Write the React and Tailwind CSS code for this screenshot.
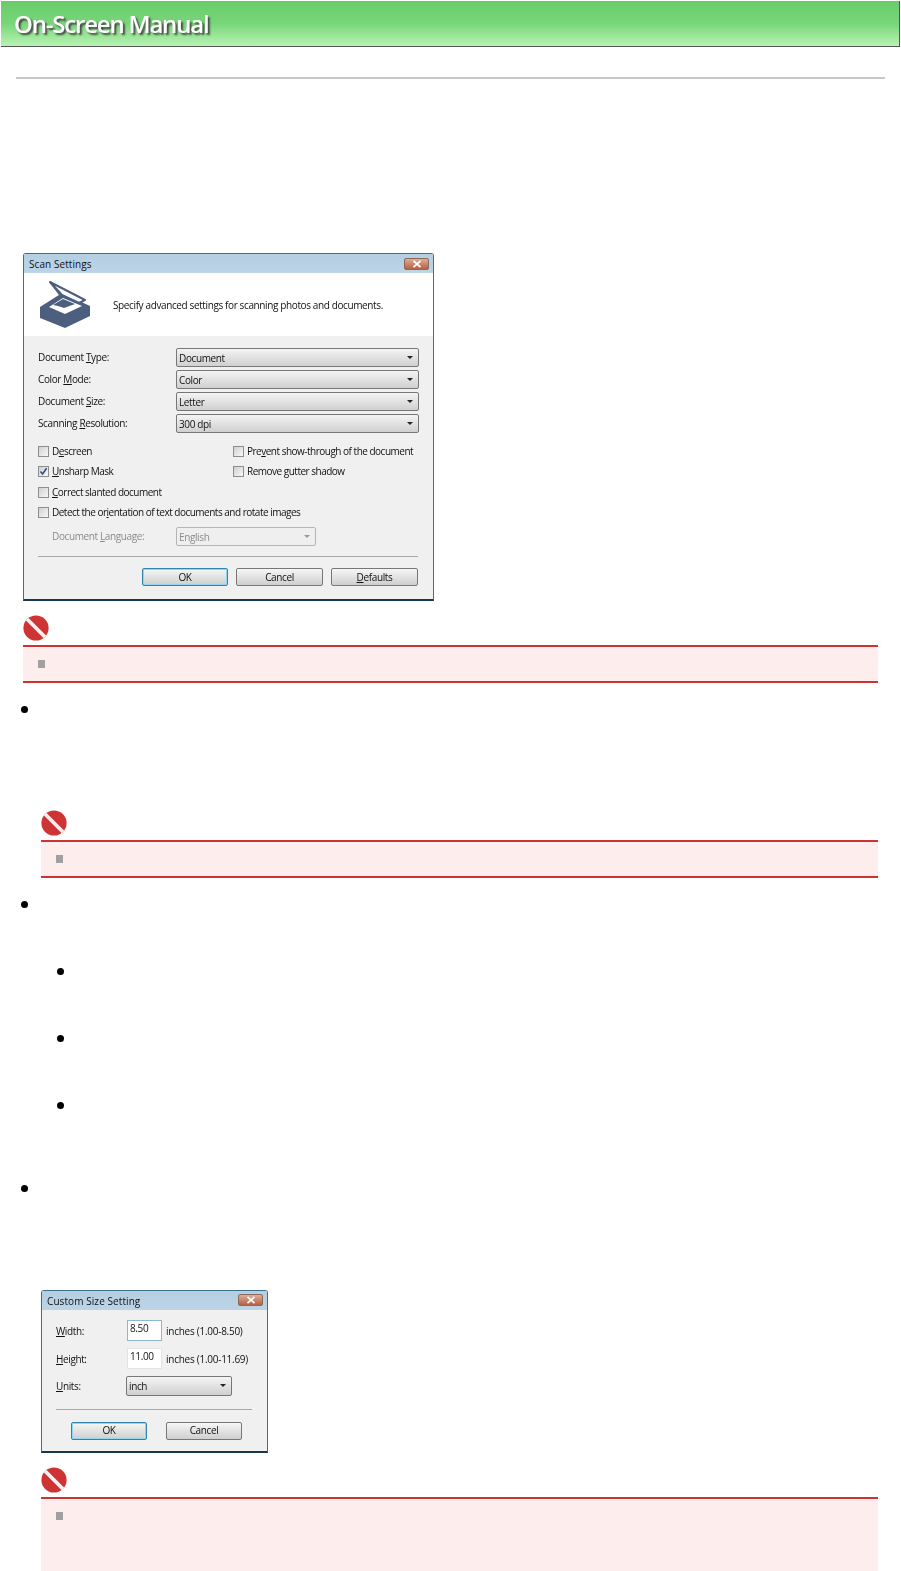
const ui = "font-['Open_Sans','Noto_Sans',sans-serif] text-[10px] text-[#111] tracking-[-0.38px]";
const disabledUi = "font-['Open_Sans','Noto_Sans',sans-serif] text-[10px] text-[#8b8b8b] tracking-[-0.38px]";
const checkUi = "font-['Open_Sans','Noto_Sans',sans-serif] text-[10px] text-[#111] tracking-[-0.5px]";
const titleUi = "font-['Open_Sans','Noto_Sans',sans-serif] text-[10px] text-[#111] tracking-[0.08px]";
const rangeUi = "font-['Open_Sans','Noto_Sans',sans-serif] text-[10px] text-[#111] tracking-[-0.26px]";

function U({ c }) {
  return <span className="underline">{c}</span>;
}

function NoEntry() {
  return (
    <svg width="26" height="26" viewBox="0 0 26 26" className="block blur-[0.3px]">
      <circle cx="13" cy="13" r="12.6" fill="#cf3434" />
      <path d="M4 4 L22 22" stroke="#fbeeee" strokeWidth="3.8" />
    </svg>
  );
}

function Notice({ left, iconGap, boxH, children }) {
  return (
    <div className={left}>
      <NoEntry />
      <div className={`${iconGap} ${boxH} mr-[23px] border-y-2 border-[#cc3333] bg-[#fdeeed] pl-[15px]`}>
        {children}
      </div>
    </div>
  );
}

function Square({ top }) {
  return <div className={`${top} h-[8px] w-[7px] bg-[#a0a0a0]`} />;
}

function Dot({ className }) {
  return <div className={`h-[7px] w-[7px] rounded-full bg-black ${className}`} />;
}

function TitleBar({ title, h }) {
  return (
    <div className={`flex ${h} items-center justify-between bg-gradient-to-b from-[#b4cee2] to-[#bcd4e6] pl-[5px] pr-[4px]`}>
      <span className={`${titleUi} pt-[2px]`}>{title}</span>
      <div className="flex h-[12px] w-[25px] items-center justify-center rounded-[2px] border border-[#8a6a5c] bg-gradient-to-b from-[#dcae98] to-[#b8603f]">
        <svg width="10" height="8" viewBox="0 0 10 8">
          <path d="M1.5 0.8 L8.5 7.2 M8.5 0.8 L1.5 7.2" stroke="#fff" strokeWidth="1.8" />
        </svg>
      </div>
    </div>
  );
}

function Select({ value, className, disabled }) {
  return (
    <div className={`flex items-center justify-between rounded-[2px] border pl-[2px] pr-[5px] ${disabled ? "border-[#b5b5b5] bg-[#efefef]" : "border-[#777] bg-gradient-to-b from-[#f4f4f4] to-[#d0d0d0]"} ${className}`}>
      <span className={`pt-[1px] ${disabled ? disabledUi : ui}`}>{value}</span>
      <span className={`h-0 w-0 border-x-[3px] border-t-[3.5px] border-x-transparent ${disabled ? "border-t-[#999]" : "border-t-[#222]"}`} />
    </div>
  );
}

function Check({ checked }) {
  return (
    <div className="flex h-[11px] w-[11px] shrink-0 items-center justify-center border border-[#8e8e8e] bg-gradient-to-br from-[#d0d0d0] to-[#f8f8f8]">
      {checked && (
        <svg width="9" height="9" viewBox="0 0 9 9">
          <path d="M1.5 4.5 L3.6 7 L7.6 1.3" fill="none" stroke="#2c4a86" strokeWidth="1.5" />
        </svg>
      )}
    </div>
  );
}

function CheckRow({ checked, children, className }) {
  return (
    <div className={`flex items-center gap-[3px] ${className || ""}`}>
      <Check checked={checked} />
      <span className={`${checkUi} whitespace-nowrap`}>{children}</span>
    </div>
  );
}

function Btn({ children, primary, className }) {
  return (
    <div className={`flex h-[18px] items-center justify-center rounded-[2px] border bg-gradient-to-b from-[#f6f6f6] to-[#cfcfcf] ${primary ? "border-[#2f86a8] shadow-[inset_0_0_0_1px_#8fd6ee]" : "border-[#777]"} ${ui} ${className}`}>
      {children}
    </div>
  );
}

function ScannerIcon() {
  return (
    <svg width="50" height="48" viewBox="0 0 50 48" className="block">
      <path d="M0 27 L22 13 L50 26 L50 36 L25 48 L0 38 Z" fill="#4d5f7f" />
      <path d="M9 27 L23 18 L42 26 L25 34 Z" fill="#ffffff" />
      <path d="M13 25 L23 19 L35 24 L24 28 L18 26 Z" fill="#4d5f7f" />
      <path d="M10 2 L45 20 L39 23 L22 15 Z" fill="#ffffff" stroke="#4d5f7f" strokeWidth="2" strokeLinejoin="round" />
      <path d="M10 2 L20 15" stroke="#4d5f7f" strokeWidth="1.6" />
    </svg>
  );
}

function ScanDialog() {
  const rows = [
    [<>Document <U c="T" />ype:</>, "Document"],
    [<>Color <U c="M" />ode:</>, "Color"],
    [<>Document <U c="S" />ize:</>, "Letter"],
    [<>Scanning <U c="R" />esolution:</>, "300 dpi"],
  ];
  return (
    <div className="ml-[23px] mt-[174px] w-[411px] rounded-t-[3px] border-x border-t border-b-2 border-x-[#3f6f8f] border-t-[#3f6f8f] border-b-[#16384f] bg-[#f0f0f0] blur-[0.6px]">
      <TitleBar title="Scan Settings" h="h-[19px]" />
      <div className="flex h-[63px] items-center bg-white pb-[1px] pl-[16px]">
        <ScannerIcon />
        <span className={`${ui} ml-[23px] pt-[3px]`}>Specify advanced settings for scanning photos and documents.</span>
      </div>
      <div className="flex flex-col gap-[3px] pl-[14px] pr-[13px] pt-[12px]">
        {rows.map(([label, value], i) => (
          <div key={i} className="flex items-center">
            <span className={`${ui} w-[138px]`}>{label}</span>
            <Select value={value} className="h-[19px] w-[243px]" />
          </div>
        ))}
      </div>
      <div className="mt-[10.5px] grid grid-cols-[195px_1fr] gap-y-[5.5px] pl-[14px]">
        <CheckRow><>D<U c="e" />screen</></CheckRow>
        <CheckRow>Pre<U c="v" />ent show-through of the document</CheckRow>
        <CheckRow checked><U c="U" />nsharp Mask</CheckRow>
        <CheckRow>Remove <U c="g" />utter shadow</CheckRow>
        <CheckRow className="col-span-2"><U c="C" />orrect slanted document</CheckRow>
        <CheckRow className="col-span-2">Detect the or<U c="i" />entation of text documents and rotate images</CheckRow>
      </div>
      <div className="mt-[7px] flex items-center pl-[28px]">
        <span className={`${disabledUi} w-[124px]`}>Document <U c="L" />anguage:</span>
        <Select disabled value="English" className="h-[19px] w-[140px]" />
      </div>
      <div className="ml-[14px] mr-[15px] mt-[10px] h-px bg-[#a8a8a8]" />
      <div className="mt-[11px] flex justify-end gap-[8px] pb-[13px] pr-[15px]">
        <Btn primary className="w-[86px]">OK</Btn>
        <Btn className="w-[87px]">Cancel</Btn>
        <Btn className="w-[87px]"><U c="D" />efaults</Btn>
      </div>
    </div>
  );
}

function SizeDialog() {
  return (
    <div className="ml-[41px] mt-[97.8px] w-[227px] rounded-t-[3px] border-x border-t border-b-2 border-x-[#3f6f8f] border-t-[#3f6f8f] border-b-[#16384f] bg-[#f0f0f0] blur-[0.6px]">
      <TitleBar title="Custom Size Setting" h="h-[19px]" />
      <div className="pl-[14px] pt-[10px]">
        <div className="flex items-center">
          <span className={`${ui} w-[71px] pt-[2px]`}><U c="W" />idth:</span>
          <div className={`h-[21px] w-[35px] border border-[#8fb6d2] bg-white pl-[2px] ${ui}`}>8.50</div>
          <span className={`${rangeUi} ml-[4px] pt-[2px]`}>inches (1.00-8.50)</span>
        </div>
        <div className="mt-[7px] flex items-center">
          <span className={`${ui} w-[71px] pt-[2px]`}><U c="H" />eight:</span>
          <div className={`h-[21px] w-[35px] border border-[#e4e4e4] bg-white pl-[2px] ${ui}`}>11.00</div>
          <span className={`${rangeUi} ml-[4px] pt-[2px]`}>inches (1.00-11.69)</span>
        </div>
        <div className="mt-[7px] flex items-center">
          <span className={`${ui} w-[70px] pt-[2px]`}><U c="U" />nits:</span>
          <Select value="inch" className="h-[20px] w-[106px]" />
        </div>
      </div>
      <div className="ml-[14px] mr-[15px] mt-[13px] h-px bg-[#a8a8a8]" />
      <div className="mt-[12px] flex gap-[19px] pb-[11px] pl-[29px]">
        <Btn primary className="w-[76px]">OK</Btn>
        <Btn className="w-[76px]">Cancel</Btn>
      </div>
    </div>
  );
}

export default function App() {
  return (
    <div className="h-[1571px] w-[901px] overflow-hidden bg-white">
      <div className="ml-[1px] mt-[1px] flex h-[46px] w-[899px] items-center border-b border-r border-[#555] bg-gradient-to-b from-[#68cc69] via-[#78d67a] to-[#b6f3b2] pl-[13px]">
        <span className="font-['Open_Sans',sans-serif] text-[24px] font-semibold tracking-[-1.2px] text-white blur-[0.4px] [text-shadow:2px_2px_2px_#444]">
          On-Screen Manual
        </span>
      </div>
      <div className="ml-[16px] mr-[16px] mt-[30px] h-[2px] bg-[#c8c8c8]" />

      <ScanDialog />

      <Notice left="ml-[23px] mt-[14px]" iconGap="mt-[4px]" boxH="h-[38px]">
        <Square top="mt-[13px]" />
      </Notice>

      <Dot className="ml-[21px] mt-[22.5px]" />

      <Notice left="ml-[41px] mt-[97.5px]" iconGap="mt-[4px]" boxH="h-[38px]">
        <Square top="mt-[13px]" />
      </Notice>

      <Dot className="ml-[21px] mt-[22.5px]" />
      <Dot className="ml-[57px] mt-[60.3px]" />
      <Dot className="ml-[57px] mt-[60.3px]" />
      <Dot className="ml-[57px] mt-[60.3px]" />
      <Dot className="ml-[21px] mt-[75.7px]" />

      <SizeDialog />

      <Notice left="ml-[41px] mt-[14px]" iconGap="mt-[4px]" boxH="h-[90px]">
        <Square top="mt-[13px]" />
      </Notice>
    </div>
  );
}
